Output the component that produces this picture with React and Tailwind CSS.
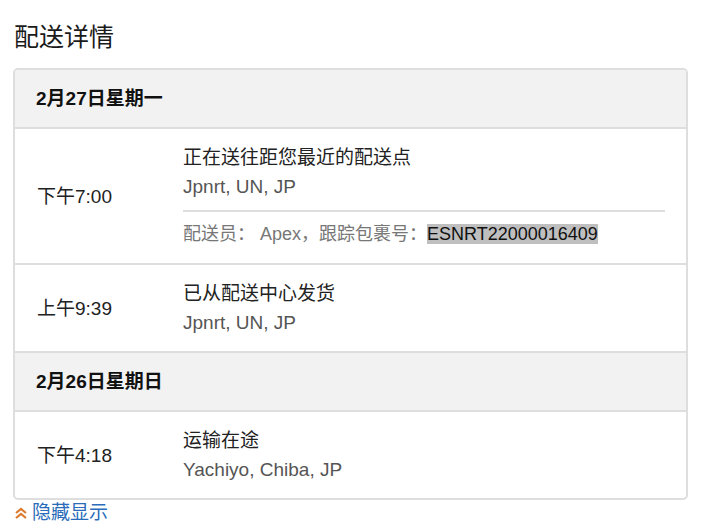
const font = { fontFamily: '"Liberation Sans", Arial, "Noto Sans CJK SC", sans-serif' };

const days = [
  {
    date: '2月27日星期一',
    events: [
      {
        time: '下午7:00',
        title: '正在送往距您最近的配送点',
        place: 'Jpnrt, UN, JP',
        courier: 'Apex',
        tracking: 'ESNRT22000016409',
      },
      { time: '上午9:39', title: '已从配送中心发货', place: 'Jpnrt, UN, JP' },
    ],
  },
  {
    date: '2月26日星期日',
    events: [{ time: '下午4:18', title: '运输在途', place: 'Yachiyo, Chiba, JP' }],
  },
];

function EventRow({ ev, last }) {
  return (
    <div className={`flex items-center pl-[22px] pr-[21px] py-[14px] ${last ? '' : 'border-b-2 border-[#dedede]'}`}>
      <div className="w-[146px] shrink-0 text-[#222]">{ev.time}</div>
      <div className="flex-1">
        <div className="text-[#222]">{ev.title}</div>
        <div className="text-[#555]">{ev.place}</div>
        {ev.courier && (
          <>
            <div className="mt-[9px] mb-[8px] h-[2px] bg-[#dedede]" />
            <div className="text-[18px] text-[#777]">
              配送员： {ev.courier}，跟踪包裹号：
              <span className="bg-[#bfbfbf] text-[#111]">{ev.tracking}</span>
            </div>
          </>
        )}
      </div>
    </div>
  );
}

export default function App() {
  return (
    <div className="bg-white min-h-screen pl-[13px] pr-[15px] pt-[20px] text-[19px] leading-[29px]" style={font}>
      <h2 className="text-[25px] leading-[34px] text-[#1a1a1a] pl-[1px] mb-[14px]">配送详情</h2>
      <div className="border-2 border-[#dedede] rounded-[5px] overflow-hidden">
        {days.map((day, di) => (
          <div key={day.date}>
            <div
              className={`flex items-center pl-[21px] bg-[#f2f2f2] border-b-2 border-[#dedede] font-bold text-[#111] ${
                di > 0 ? 'h-[61px] border-t-2' : 'h-[59px]'
              }`}
            >
              {day.date}
            </div>
            {day.events.map((ev, i) => (
              <EventRow key={ev.time} ev={ev} last={i === day.events.length - 1} />
            ))}
          </div>
        ))}
      </div>
      <div className="flex items-center mt-[1px] leading-[24px]">
        <svg width="14" height="14" viewBox="0 0 14 14" className="ml-[1px] mr-[4px]">
          <path d="M2 7 L7 3 L12 7 M2 12 L7 8 L12 12" stroke="#dc7a2e" strokeWidth="2.2" fill="none" />
        </svg>
        <span className="text-[#2a6cb9]">隐藏显示</span>
      </div>
    </div>
  );
}
